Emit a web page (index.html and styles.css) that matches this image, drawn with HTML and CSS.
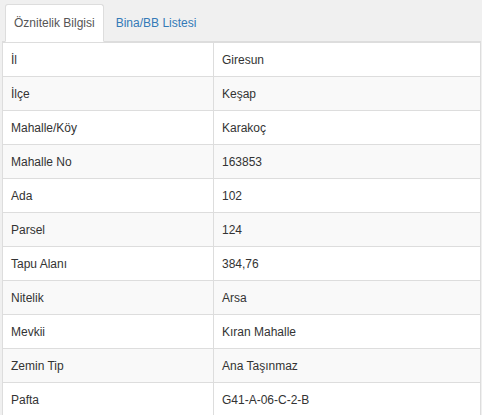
FILE: index.html
```html
<!DOCTYPE html>
<html lang="tr">
<head>
<meta charset="utf-8">
<link rel="stylesheet" href="styles.css">
</head>
<body>
<div class="panel">
  <ul class="tabs">
    <li class="tab active"><a>Öznitelik Bilgisi</a></li>
    <li class="tab"><a>Bina/BB Listesi</a></li>
  </ul>
  <table class="info">
    <tbody>
      <tr><td>İl</td><td>Giresun</td></tr>
      <tr><td>İlçe</td><td>Keşap</td></tr>
      <tr><td>Mahalle/Köy</td><td>Karakoç</td></tr>
      <tr><td>Mahalle No</td><td>163853</td></tr>
      <tr><td>Ada</td><td>102</td></tr>
      <tr><td>Parsel</td><td>124</td></tr>
      <tr><td>Tapu Alanı</td><td>384,76</td></tr>
      <tr><td>Nitelik</td><td>Arsa</td></tr>
      <tr><td>Mevkii</td><td>Kıran Mahalle</td></tr>
      <tr><td>Zemin Tip</td><td>Ana Taşınmaz</td></tr>
      <tr><td>Pafta</td><td>G41-A-06-C-2-B</td></tr>
    </tbody>
  </table>
</div>
</body>
</html>
```

FILE: styles.css
```css
html, body {
  margin: 0;
  padding: 0;
  background: #f0f0f0;
  font-family: "Liberation Sans", Arial, sans-serif;
  font-size: 12px;
  color: #333;
}
.panel {
  padding: 0 1px 0 2px;
}
.tabs {
  list-style: none;
  margin: 0;
  padding: 4px 0 0 3px;
  display: flex;
  border-bottom: 1px solid #ddd;
  height: 37px;
}
.tab {
  margin-right: 2px;
  margin-bottom: -1px;
}
.tab a {
  display: block;
  height: 36px;
  line-height: 36px;
  padding: 0 8px 0 8px;
  border: 1px solid transparent;
  border-radius: 3px 3px 0 0;
  color: #337ab7;
  box-sizing: content-box;
}
.tab.active a {
  background: #fff;
  color: #555;
  border-color: #ddd #ddd transparent #ddd;
}
.tab + .tab a {
  padding-left: 9px;
}
.info {
  width: 100%;
  border-collapse: collapse;
  background: #fff;
  border: 1px solid #ddd;
}
.info td {
  border: 1px solid #ddd;
  padding: 0 8px;
  height: 33px;
  line-height: 18px;
  vertical-align: middle;
}
.info td:first-child {
  width: 194px;
}
.info tr:nth-child(even) {
  background: #f9f9f9;
}
```
